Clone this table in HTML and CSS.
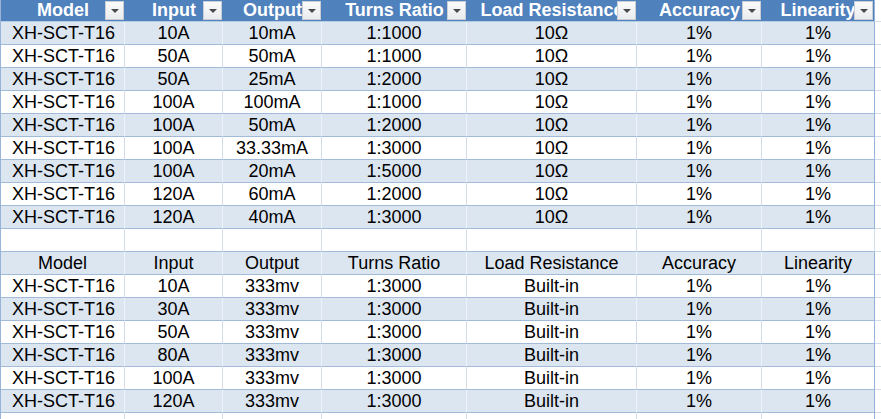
FILE: index.html
```html
<!DOCTYPE html>
<html>
<head>
<meta charset="utf-8">
<link rel="stylesheet" href="styles.css">
</head>
<body>
<div class="sheet">
  <div class="row head">
    <div class="c first"><span class="t">Model</span><span class="dd"></span></div>
    <div class="c"><span class="t">Input</span><span class="dd"></span></div>
    <div class="c"><span class="t">Output</span><span class="dd"></span></div>
    <div class="c"><span class="t">Turns Ratio</span><span class="dd"></span></div>
    <div class="c"><span class="t">Load Resistance</span><span class="dd"></span></div>
    <div class="c"><span class="t">Accuracy</span><span class="dd"></span></div>
    <div class="c last"><span class="t">Linearity</span><span class="dd"></span></div>
    <div class="c x"></div>
  </div>
  <div class="row band"><div class="c first">XH-SCT-T16</div><div class="c">10A</div><div class="c">10mA</div><div class="c">1:1000</div><div class="c">10Ω</div><div class="c">1%</div><div class="c last">1%</div><div class="c x"></div></div>
  <div class="row"><div class="c first">XH-SCT-T16</div><div class="c">50A</div><div class="c">50mA</div><div class="c">1:1000</div><div class="c">10Ω</div><div class="c">1%</div><div class="c last">1%</div><div class="c x"></div></div>
  <div class="row band"><div class="c first">XH-SCT-T16</div><div class="c">50A</div><div class="c">25mA</div><div class="c">1:2000</div><div class="c">10Ω</div><div class="c">1%</div><div class="c last">1%</div><div class="c x"></div></div>
  <div class="row"><div class="c first">XH-SCT-T16</div><div class="c">100A</div><div class="c">100mA</div><div class="c">1:1000</div><div class="c">10Ω</div><div class="c">1%</div><div class="c last">1%</div><div class="c x"></div></div>
  <div class="row band"><div class="c first">XH-SCT-T16</div><div class="c">100A</div><div class="c">50mA</div><div class="c">1:2000</div><div class="c">10Ω</div><div class="c">1%</div><div class="c last">1%</div><div class="c x"></div></div>
  <div class="row"><div class="c first">XH-SCT-T16</div><div class="c">100A</div><div class="c">33.33mA</div><div class="c">1:3000</div><div class="c">10Ω</div><div class="c">1%</div><div class="c last">1%</div><div class="c x"></div></div>
  <div class="row band"><div class="c first">XH-SCT-T16</div><div class="c">100A</div><div class="c">20mA</div><div class="c">1:5000</div><div class="c">10Ω</div><div class="c">1%</div><div class="c last">1%</div><div class="c x"></div></div>
  <div class="row"><div class="c first">XH-SCT-T16</div><div class="c">120A</div><div class="c">60mA</div><div class="c">1:2000</div><div class="c">10Ω</div><div class="c">1%</div><div class="c last">1%</div><div class="c x"></div></div>
  <div class="row band"><div class="c first">XH-SCT-T16</div><div class="c">120A</div><div class="c">40mA</div><div class="c">1:3000</div><div class="c">10Ω</div><div class="c">1%</div><div class="c last">1%</div><div class="c x"></div></div>
  <div class="row empty"><div class="c first"></div><div class="c"></div><div class="c"></div><div class="c"></div><div class="c"></div><div class="c"></div><div class="c"></div><div class="c x"></div></div>
  <div class="row band"><div class="c center">Model</div><div class="c">Input</div><div class="c">Output</div><div class="c">Turns Ratio</div><div class="c">Load Resistance</div><div class="c">Accuracy</div><div class="c last">Linearity</div><div class="c x"></div></div>
  <div class="row"><div class="c first">XH-SCT-T16</div><div class="c">10A</div><div class="c">333mv</div><div class="c">1:3000</div><div class="c">Built-in</div><div class="c">1%</div><div class="c last">1%</div><div class="c x"></div></div>
  <div class="row band"><div class="c first">XH-SCT-T16</div><div class="c">30A</div><div class="c">333mv</div><div class="c">1:3000</div><div class="c">Built-in</div><div class="c">1%</div><div class="c last">1%</div><div class="c x"></div></div>
  <div class="row"><div class="c first">XH-SCT-T16</div><div class="c">50A</div><div class="c">333mv</div><div class="c">1:3000</div><div class="c">Built-in</div><div class="c">1%</div><div class="c last">1%</div><div class="c x"></div></div>
  <div class="row band"><div class="c first">XH-SCT-T16</div><div class="c">80A</div><div class="c">333mv</div><div class="c">1:3000</div><div class="c">Built-in</div><div class="c">1%</div><div class="c last">1%</div><div class="c x"></div></div>
  <div class="row"><div class="c first">XH-SCT-T16</div><div class="c">100A</div><div class="c">333mv</div><div class="c">1:3000</div><div class="c">Built-in</div><div class="c">1%</div><div class="c last">1%</div><div class="c x"></div></div>
  <div class="row band"><div class="c first">XH-SCT-T16</div><div class="c">120A</div><div class="c">333mv</div><div class="c">1:3000</div><div class="c">Built-in</div><div class="c">1%</div><div class="c last">1%</div><div class="c x"></div></div>
  <div class="row"><div class="c first"></div><div class="c"></div><div class="c"></div><div class="c"></div><div class="c"></div><div class="c"></div><div class="c last"></div><div class="c x"></div></div>
</div>
</body>
</html>
```

FILE: styles.css
```css
html, body {
  margin: 0;
  padding: 0;
  background: #ffffff;
}
body {
  font-family: "Liberation Sans", Arial, sans-serif;
  font-size: 18px;
  color: #000000;
  overflow: hidden;
}
.sheet {
  width: 881px;
  height: 419px;
  overflow: hidden;
  border-left: 1px solid #9bb3d6;
  box-sizing: border-box;
}
.row {
  display: grid;
  grid-template-columns: 124px 98px 99px 145px 170px 125px 113px 1fr;
  height: 23px;
  background: #ffffff;
}
.row.band .c {
  background: #dce6f1;
}
.c {
  box-sizing: border-box;
  height: 23px;
  line-height: 22px;
  border-bottom: 1px solid #a3bbdb;
  border-right: 1px solid #d4dce8;
  text-align: center;
  white-space: nowrap;
  overflow: hidden;
  position: relative;
}
.row.band .c {
  border-right-color: #eef3f9;
}
.c.first {
  text-align: left;
  padding-left: 11px;
}
.c.center {
  text-align: center;
}
.c.last, .row.band .c.last {
  border-right: 1px solid #95b3d7;
}
.c.x, .row.band .c.x {
  background: #ffffff;
  border-right: none;
  border-bottom-color: #d4dce8;
}
.row.empty .c {
  border-bottom-color: #a3bbdb;
}
.row.empty .c.x {
  border-bottom-color: #d4dce8;
}
.row.head {
  height: 22px;
}
.row.head .c {
  height: 22px;
  line-height: 21px;
  background: #4f81bd;
  color: #ffffff;
  font-weight: bold;
  border-right: none;
  border-bottom: 1px solid #b8cce4;
}
.row.head .c.x {
  background: #ffffff;
  border-bottom-color: #d4dce8;
}
.row.head .c.last {
  border-right: 1px solid #95b3d7;
}
.row.head .c.first {
  text-align: center;
  padding-left: 0;
}
.t {
  display: inline-block;
}
.dd {
  position: absolute;
  right: 1px;
  top: 1px;
  width: 19px;
  height: 19px;
  box-sizing: border-box;
  background: linear-gradient(#fbfbfb, #e9ebee);
  border: 1px solid #c9ced6;
}
.dd::after {
  content: "";
  position: absolute;
  left: 5px;
  top: 7px;
  width: 0;
  height: 0;
  border-left: 4px solid transparent;
  border-right: 4px solid transparent;
  border-top: 4px solid #4a4a4a;
}
```
